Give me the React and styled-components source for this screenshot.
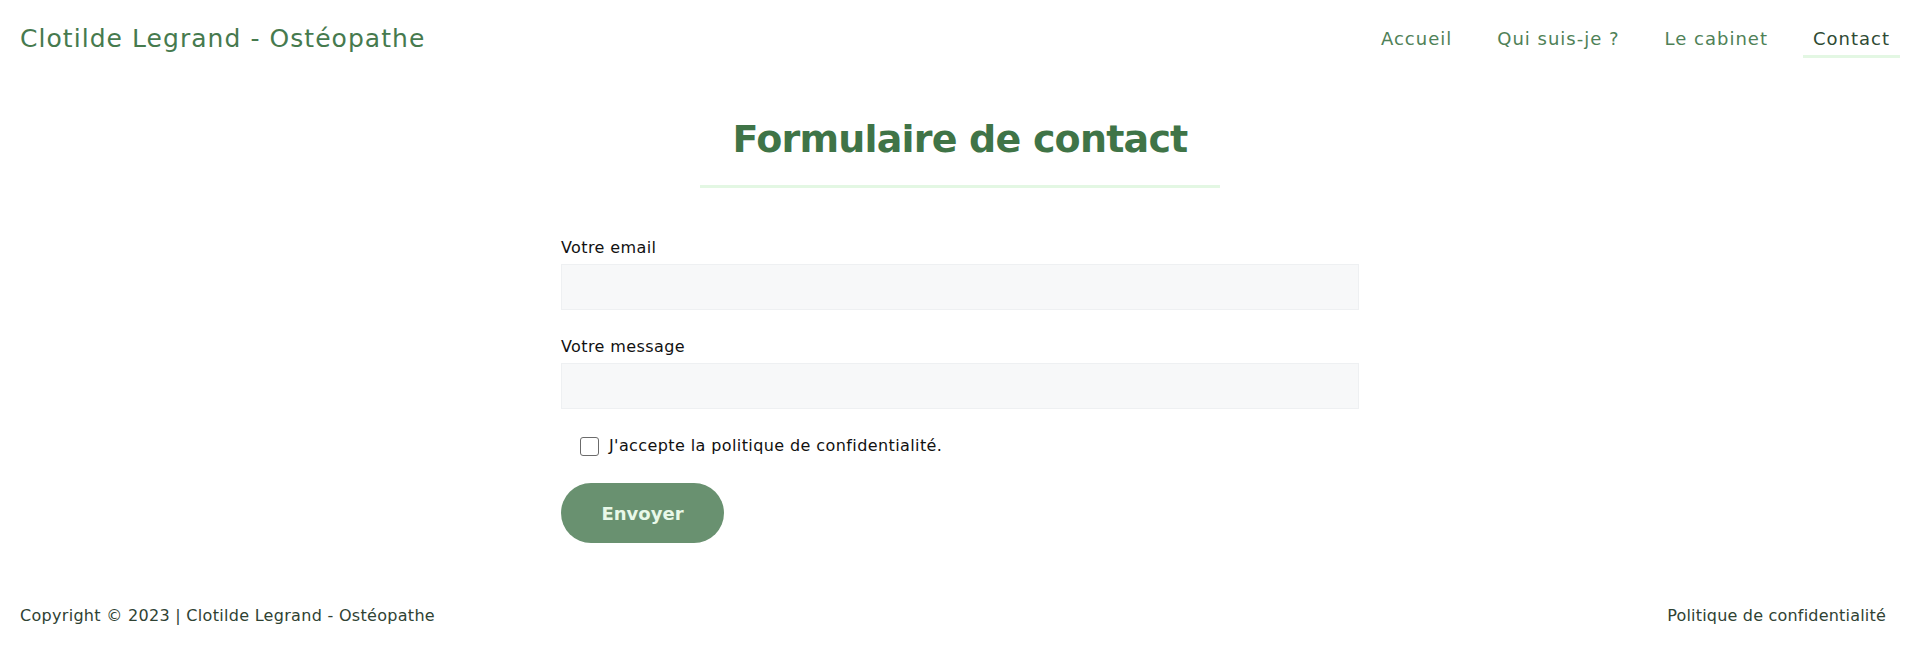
import React from "react";
import styled, { createGlobalStyle } from "styled-components";

const GlobalStyle = createGlobalStyle`
  * {
    box-sizing: border-box;
  }

  body {
    margin: 0;
    background: #ffffff;
    font-family: "DejaVu Sans", "Liberation Sans", sans-serif;
    color: #111;
  }
`;

const navLinks = [
  { label: "Accueil" },
  { label: "Qui suis-je ?" },
  { label: "Le cabinet" },
  { label: "Contact", active: true },
];

export default function App() {
  return (
    <>
      <GlobalStyle />
      <Page>
        <Header>
          <Logo href="#">Clotilde Legrand - Ostéopathe</Logo>
          <Nav>
            {navLinks.map((link) => (
              <NavLink key={link.label} href="#" $active={link.active}>
                {link.label}
              </NavLink>
            ))}
          </Nav>
        </Header>

        <Main>
          <TitleBlock>
            <Title>Formulaire de contact</Title>
            <TitleLine />
          </TitleBlock>

          <Form onSubmit={(e) => e.preventDefault()}>
            <Field>
              <Label htmlFor="email">Votre email</Label>
              <Input id="email" type="email" />
            </Field>
            <Field>
              <Label htmlFor="message">Votre message</Label>
              <Input id="message" type="text" />
            </Field>
            <CheckRow>
              <Checkbox id="privacy" type="checkbox" />
              <CheckLabel htmlFor="privacy">
                J'accepte la politique de confidentialité.
              </CheckLabel>
            </CheckRow>
            <SubmitButton type="submit">Envoyer</SubmitButton>
          </Form>
        </Main>

        <Footer>
          <FooterText>Copyright © 2023 | Clotilde Legrand - Ostéopathe</FooterText>
          <FooterLink href="#">Politique de confidentialité</FooterLink>
        </Footer>
      </Page>
    </>
  );
}

// Page wrapper
const Page = styled.div`
  width: 100%;
  min-height: 660px;
  display: flex;
  flex-direction: column;
`;

// Top bar with logo and menu
const Header = styled.header`
  height: 78px;
  padding: 0 20px;
  display: flex;
  align-items: center;
  justify-content: space-between;
`;

const Logo = styled.a`
  font-size: 25px;
  letter-spacing: 1.05px;
  color: #467a4e;
  text-decoration: none;
  line-height: 30px;
`;

const Nav = styled.nav`
  display: flex;
  align-items: center;
  gap: 25px;
`;

const NavLink = styled.a`
  display: block;
  padding: 8px 10px 5px;
  font-size: 18px;
  line-height: 22px;
  letter-spacing: 1px;
  text-decoration: none;
  color: ${(p) => (p.$active ? "#2f4a34" : "#4f8157")};
  border-bottom: 3px solid ${(p) => (p.$active ? "#e3f7e3" : "transparent")};
`;

// Main content
const Main = styled.main`
  display: flex;
  flex-direction: column;
  align-items: center;
`;

const TitleBlock = styled.div`
  margin-top: 38px;
  display: flex;
  flex-direction: column;
  align-items: center;
`;

const Title = styled.h1`
  margin: 0;
  font-size: 38px;
  line-height: 46px;
  font-weight: 700;
  letter-spacing: -0.8px;
  color: #3f7447;
`;

const TitleLine = styled.hr`
  width: 520px;
  height: 3px;
  margin: 23px 0 0;
  border: 0;
  background-color: #e3f7e3;
`;

const Form = styled.form`
  width: 798px;
  margin-top: 48px;
  display: flex;
  flex-direction: column;
  align-items: flex-start;
  gap: 25px;
`;

const Field = styled.div`
  width: 100%;
  display: flex;
  flex-direction: column;
  gap: 4px;
`;

const Label = styled.label`
  font-size: 16px;
  line-height: 24px;
  letter-spacing: 0.4px;
  color: #111;
`;

const Input = styled.input`
  width: 100%;
  height: 46px;
  padding: 0 12px;
  border: 1px solid #eef0f2;
  background: #f7f8f9;
  font-family: inherit;
  font-size: 16px;
  outline: none;
`;

const CheckRow = styled.div`
  display: flex;
  align-items: center;
  gap: 10px;
  padding-left: 19px;
  height: 24px;
`;

const Checkbox = styled.input`
  appearance: none;
  margin: 0;
  width: 19px;
  height: 19px;
  border: 1px solid #6b6b6b;
  border-radius: 3px;
  background: #fff;
`;

const CheckLabel = styled.label`
  font-size: 16px;
  line-height: 24px;
  letter-spacing: 0.4px;
  color: #111;
`;

const SubmitButton = styled.button`
  width: 163px;
  height: 60px;
  border: 0;
  border-radius: 30px;
  background-color: #699170;
  color: #e8f8e8;
  font-family: inherit;
  font-size: 18px;
  font-weight: 700;
  cursor: pointer;
`;

// Bottom bar
const Footer = styled.footer`
  margin-top: 61px;
  padding: 0 34px 0 20px;
  display: flex;
  justify-content: space-between;
  align-items: center;
  height: 24px;
`;

const FooterText = styled.p`
  margin: 0;
  font-size: 16px;
  line-height: 24px;
  letter-spacing: 0.3px;
  color: #2f4233;
`;

const FooterLink = styled.a`
  font-size: 16px;
  line-height: 24px;
  letter-spacing: 0.2px;
  color: #2f4233;
  text-decoration: none;
`;
